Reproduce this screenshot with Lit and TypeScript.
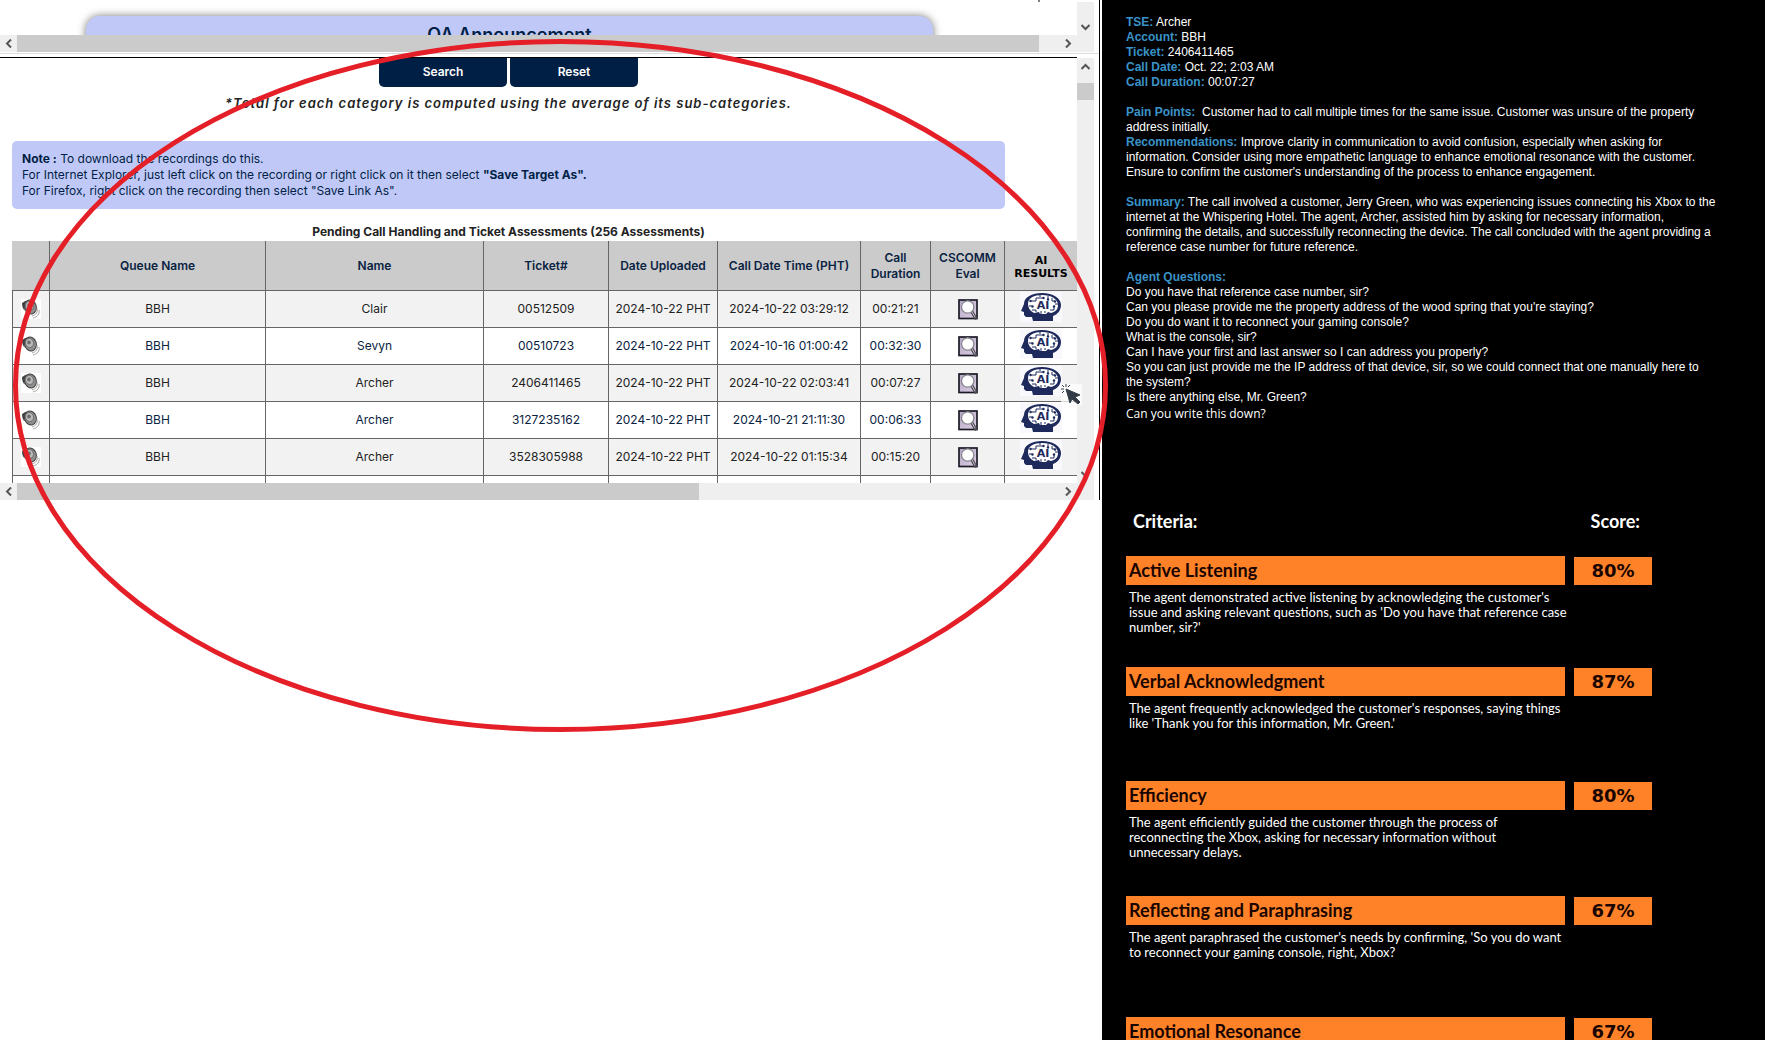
import { LitElement, html, css, svg } from "lit";
import { customElement } from "lit/decorators.js";

interface Call {
  queue: string;
  name: string;
  ticket: string;
  uploaded: string;
  called: string;
  duration: string;
}

interface Criterion {
  title: string;
  score: string;
  lines: string[];
}

const call = (name: string, ticket: string, called: string, duration: string): Call => ({
  queue: "BBH",
  name,
  ticket,
  uploaded: "2024-10-22 PHT",
  called,
  duration,
});

const CALLS: Call[] = [
  call("Clair", "00512509", "2024-10-22 03:29:12", "00:21:21"),
  call("Sevyn", "00510723", "2024-10-16 01:00:42", "00:32:30"),
  call("Archer", "2406411465", "2024-10-22 02:03:41", "00:07:27"),
  call("Archer", "3127235162", "2024-10-21 21:11:30", "00:06:33"),
  call("Archer", "3528305988", "2024-10-22 01:15:34", "00:15:20"),
];

const FACTS: [string, string][] = [
  ["TSE:", "Archer"],
  ["Account:", "BBH"],
  ["Ticket:", "2406411465"],
  ["Call Date:", "Oct. 22; 2:03 AM"],
  ["Call Duration:", "00:07:27"],
];

const QUESTIONS: string[] = [
  "Do you have that reference case number, sir?",
  "Can you please provide me the property address of the wood spring that you're staying?",
  "Do you do want it to reconnect your gaming console?",
  "What is the console, sir?",
  "Can I have your first and last answer so I can address you properly?",
  "So you can just provide me the IP address of that device, sir, so we could connect that one manually here to the system?",
  "Is there anything else, Mr. Green?",
];

const CRITERIA: Criterion[] = [
  {
    title: "Active Listening",
    score: "80%",
    lines: [
      "The agent demonstrated active listening by acknowledging the customer's",
      "issue and asking relevant questions, such as 'Do you have that reference case",
      "number, sir?'",
    ],
  },
  {
    title: "Verbal Acknowledgment",
    score: "87%",
    lines: [
      "The agent frequently acknowledged the customer's responses, saying things",
      "like 'Thank you for this information, Mr. Green.'",
    ],
  },
  {
    title: "Efficiency",
    score: "80%",
    lines: [
      "The agent efficiently guided the customer through the process of",
      "reconnecting the Xbox, asking for necessary information without",
      "unnecessary delays.",
    ],
  },
  {
    title: "Reflecting and Paraphrasing",
    score: "67%",
    lines: [
      "The agent paraphrased the customer's needs by confirming, 'So you do want",
      "to reconnect your gaming console, right, Xbox?",
    ],
  },
  { title: "Emotional Resonance", score: "67%", lines: [] },
];

const speakerIcon = html`<svg width="20" height="20" viewBox="0 0 20 20" aria-hidden="true">
  <rect width="20" height="20" fill="#fff" />
  <path d="M1 5 L4 2 L10 1 L13 13 L9 15 L2 10 Z" fill="#6f6f6f" />
  <path d="M1 4 L5 2 L5 9 L2 9 Z" fill="#3f3f3f" />
  <ellipse cx="9.500" cy="8" rx="5.800" ry="7" transform="rotate(-18 9.500 8)" fill="#8e8e8e" stroke="#444" />
  <ellipse cx="8.500" cy="7" rx="4" ry="4.600" transform="rotate(-18 8.500 7)" fill="#b9b9b9" stroke="#666" stroke-width=".8" />
  <ellipse cx="8" cy="6.500" rx="1.800" ry="2" fill="#6b6b6b" />
  <path d="M16 9 C17 13 15 16 11 17 M18 11 C19 15 16 18 12 19" fill="none" stroke="#a3a3a0" stroke-width="1" />
</svg>`;

const lensIcon = html`<svg width="20" height="21" viewBox="0 0 20 21" aria-hidden="true">
  <defs>
    <linearGradient id="paper" x1="0" y1="0" x2="1" y2="1">
      <stop offset="0" stop-color="#b3a6c4" />
      <stop offset="1" stop-color="#dccfe2" />
    </linearGradient>
  </defs>
  <rect x="1" y="1" width="18" height="18.500" fill="url(#paper)" stroke="#1c1a26" stroke-width="1.700" />
  <path d="M14 13 L17.500 19" stroke="#4b4753" stroke-width="3.200" stroke-linecap="round" />
  <path d="M14 13 L17 18" stroke="#c9c6cf" stroke-width="1" stroke-linecap="round" />
  <circle cx="9.700" cy="8" r="6.200" fill="#fff" stroke="#85858f" stroke-width="1.300" />
</svg>`;

const brainIcon = html`<svg width="42" height="30" viewBox="0 0 42 30" aria-hidden="true">
  <rect width="42" height="30" fill="#f8f8fd" />
  <path d="M4 12 C4 5 12 1 22 1 C33 1 41 6 41 13 C41 18 38 22 33 24 L33 29 L13 29 L12 25 L6 25 L4 23 L4 20 L1 19 Z" fill="#1e2a5c" />
  <path d="M8 12 C8 6 14 3 22 3 C31 3 38 7 38 13 C38 18 35 20 31 21 L28 20 L26 22 L20 22 L19 20 L14 21 C10 19 8 16 8 12 Z" fill="#fff" />
  <path d="M10 9 L16 9 L16 6 L23 6 M20 3 L20 5 M28 4 L28 8 M32 6 L32 9 L35 9 M9 14 L12 14 M12 18 L16 18 L16 20 M21 19 L21 22 M25 19 L25 21 M30 18 L34 18 L34 14 M35 12 L38 12" fill="none" stroke="#1e2a5c" stroke-width="1" />
  <g fill="#1e2a5c">
    <circle cx="10.500" cy="9" r="1.200" /><circle cx="23.500" cy="6" r="1.200" /><circle cx="28" cy="7.500" r="1.200" />
    <circle cx="35" cy="9.500" r="1.200" /><circle cx="12.500" cy="14.500" r="1.200" /><circle cx="34" cy="14.500" r="1.200" />
  </g>
  <text x="23" y="17" text-anchor="middle" font-family="'DejaVu Sans', sans-serif" font-size="11" font-weight="700" fill="#1e2a5c">AI</text>
</svg>`;

const chevron = (d: string) => html`<svg width="9" height="9" viewBox="0 0 9 9" aria-hidden="true">
  ${svg`<path d=${d} fill="none" stroke="#555" stroke-width="2" />`}
</svg>`;
const LEFT = "M7 0.500 L3 4.500 L7 8.500";
const RIGHT = "M2 0.500 L6 4.500 L2 8.500";
const UP = "M0.500 7 L4.500 3 L8.500 7";
const DOWN = "M0.500 2 L4.500 6 L8.500 2";

@customElement("app-root")
export class AppRoot extends LitElement {
  static styles = css`
    :host {
      display: block;
      font-family: Inter, "Liberation Sans", sans-serif;
    }
    * {
      box-sizing: border-box;
    }
    h1, h2, h3, p, ul, dl, dd {
      margin: 0;
      padding: 0;
      font: inherit;
    }
    button {
      font: inherit;
      border: 0;
      padding: 0;
      background: none;
    }
    .page {
      position: relative;
      display: grid;
      grid-template-columns: minmax(0, 1102fr) minmax(0, 663fr);
      height: 100vh;
      padding-right: 3px;
      overflow: hidden;
      background: #fff;
    }
    .frames {
      align-self: start;
      display: flex;
      flex-direction: column;
      margin-right: 2px;
      border-right: 1px solid #000;
    }
    .frame {
      display: flex;
      margin-right: 5px;
    }
    .divider {
      height: 4px;
      border-top: 1px solid #ddd;
      margin-top: 1px;
    }
    .view {
      flex: 1;
      min-width: 0;
    }
    .content {
      overflow: hidden;
    }
    .upper .content {
      height: 35px;
      padding: 16px 144px 0 86px;
    }
    .lower .view {
      border-top: 1px solid #000;
    }
    .lower .content {
      height: 425px;
      padding-left: 12px;
    }
    .banner {
      height: 60px;
      padding-top: 7px;
      border-radius: 14px;
      background: #c0c8f8;
      box-shadow: 0 0 8px #777;
      color: #001f45;
      text-align: center;
      font-size: 18px;
      line-height: 24px;
      font-weight: 600;
    }
    .hbar {
      display: flex;
      align-items: center;
      height: 17px;
      background: #efefef;
    }
    .arrow {
      display: flex;
      align-items: center;
      justify-content: center;
      width: 17px;
      height: 17px;
      flex: none;
    }
    .thumb {
      height: 17px;
      background: #cbcbcb;
    }
    .thumb.long {
      flex: 1022;
    }
    .rest.long {
      flex: 21;
    }
    .thumb.mid {
      flex: 682;
    }
    .rest.mid {
      flex: 361;
    }
    .vbar {
      display: flex;
      flex-direction: column;
      justify-content: space-between;
      width: 17px;
      background: #efefef;
    }
    .vbar .thumb {
      margin-top: 8px;
    }
    .upper .vbar {
      justify-content: flex-end;
      margin-top: 2px;
      padding-bottom: 16px;
    }
    .lower .vbar {
      margin-top: 1px;
      padding-bottom: 17px;
    }
    .actions {
      display: flex;
      justify-content: center;
      gap: 3px;
    }
    .action {
      width: 128px;
      height: 29px;
      padding-bottom: 2px;
      border-radius: 0 0 5px 5px;
      background: #001f45;
      color: #fff;
      font-size: 12px;
      font-weight: 600;
    }
    .main {
      margin-right: 72px;
    }
    .hint {
      margin-top: 7px;
      text-align: center;
      color: #222;
      font-size: 13px;
      line-height: 18px;
      font-style: italic;
      font-weight: 600;
      letter-spacing: 1px;
    }
    .note {
      margin-top: 29px;
      padding: 10px;
      border-radius: 5px;
      background: #c0c8f8;
      color: #001f45;
      font-size: 12px;
      line-height: 16px;
    }
    .note b {
      font-weight: 700;
    }
    table {
      width: 100%;
      table-layout: fixed;
      border-spacing: 0;
      font-size: 12px;
      line-height: 16px;
      text-align: center;
      color: #222;
    }
    caption {
      padding: 15px 72px 1px 0;
      font-weight: 700;
      color: #222;
    }
    .c-play { width: 38px; }
    .c-queue { width: 216px; }
    .c-name { width: 218px; }
    .c-ticket { width: 125px; }
    .c-uploaded { width: 109px; }
    .c-called { width: 143px; }
    .c-duration { width: 70px; }
    .c-eval { width: 74px; }
    th, td {
      padding: 0;
      border-right: 1px solid #666;
      border-bottom: 1px solid #666;
    }
    th {
      height: 50px;
      background: #cbcbcb;
      color: #0a2342;
      font-weight: 600;
    }
    th.ai {
      padding-top: 3px;
      color: #000;
      font-family: "DejaVu Sans", sans-serif;
      font-size: 11px;
      line-height: 13px;
      font-weight: 700;
    }
    td {
      height: 37px;
    }
    td:first-child {
      border-left: 1px solid #666;
    }
    th:last-child, td:last-child {
      border-right: 0;
    }
    td:last-child {
      padding-bottom: 4px;
    }
    tbody tr:nth-child(odd) {
      background: #f2f2f2;
    }
    tbody tr:nth-child(even) {
      color: #0a2342;
    }
    .icon {
      display: block;
      margin: 0 auto;
    }
    .icon svg {
      display: block;
    }
    .overlay {
      position: absolute;
      left: 0;
      top: 0;
      pointer-events: none;
    }
    .report {
      display: flex;
      flex-direction: column;
      min-height: 0;
      padding: 15px 24px 0;
      background: #000;
      color: #fff;
      font-family: "Liberation Sans", Arial, sans-serif;
      font-size: 12px;
      line-height: 15px;
      overflow: hidden;
    }
    .report b {
      color: #3a93c8;
    }
    .facts {
      margin-bottom: 15px;
    }
    .prose {
      max-width: 590px;
      margin-bottom: 15px;
    }
    .questions {
      max-width: 590px;
      list-style: none;
    }
    .last {
      padding-top: 1px;
      font-family: "Open Sans", sans-serif;
      font-size: 12px;
    }
    .scores {
      margin-top: 89px;
      max-width: 526px;
      font-family: Lato, sans-serif;
    }
    .labels {
      display: flex;
      justify-content: space-between;
      padding: 0 12px 0 7px;
      margin-bottom: 24px;
      font-size: 18px;
      line-height: 22px;
      font-weight: 700;
    }
    .criteria {
      display: grid;
      grid-template-rows: 111px 114px 115px 121px 29px;
      list-style: none;
    }
    .head {
      display: grid;
      grid-template-columns: 1fr 78px;
      gap: 9px;
      color: #1a0500;
    }
    .title {
      height: 29px;
      padding-left: 3px;
      background: #ff8228;
      font-size: 18px;
      line-height: 29px;
      font-weight: 700;
    }
    .score {
      height: 28px;
      margin-top: 1px;
      background: #ff8228;
      text-align: center;
      font-family: "DejaVu Sans", sans-serif;
      font-size: 18px;
      line-height: 28px;
      font-weight: 700;
    }
    .detail {
      padding: 5px 0 0 3px;
      font-size: 13px;
      line-height: 15px;
      white-space: nowrap;
    }
  `;

  private renderRow(c: Call) {
    return html`<tr>
      <td><button class="icon" aria-label="Play recording">${speakerIcon}</button></td>
      <td>${c.queue}</td>
      <td>${c.name}</td>
      <td>${c.ticket}</td>
      <td>${c.uploaded}</td>
      <td>${c.called}</td>
      <td>${c.duration}</td>
      <td><button class="icon" aria-label="Open evaluation">${lensIcon}</button></td>
      <td><button class="icon" aria-label="Open AI results">${brainIcon}</button></td>
    </tr>`;
  }

  private renderCriterion(c: Criterion) {
    return html`<li>
      <div class="head">
        <h3 class="title">${c.title}</h3>
        <div class="score">${c.score}</div>
      </div>
      <p class="detail">${c.lines.map((line, i) => (i ? html`<br />${line}` : line))}</p>
    </li>`;
  }

  render() {
    return html`<div class="page">
      <main class="frames">
        <section class="frame upper">
          <div class="view">
            <div class="content"><h1 class="banner">QA Announcement</h1></div>
            <div class="hbar">
              <button class="arrow" aria-label="Scroll left">${chevron(LEFT)}</button>
              <div class="thumb long"></div>
              <div class="rest long"></div>
              <button class="arrow" aria-label="Scroll right">${chevron(RIGHT)}</button>
            </div>
          </div>
          <div class="vbar">
            <button class="arrow" aria-label="Scroll down">${chevron(DOWN)}</button>
          </div>
        </section>
        <div class="divider"></div>
        <section class="frame lower">
          <div class="view">
            <div class="content">
              <div class="main">
                <div class="actions">
                  <button class="action">Search</button>
                  <button class="action">Reset</button>
                </div>
                <p class="hint">*Total for each category is computed using the average of its sub-categories.</p>
                <p class="note">
                  <b>Note :</b> To download the recordings do this.<br />
                  For Internet Explorer, just left click on the recording or right click on it then select
                  <b>"Save Target As".</b><br />
                  For Firefox, right click on the recording then select "Save Link As".
                </p>
              </div>
              <table>
                <caption>Pending Call Handling and Ticket Assessments (256 Assessments)</caption>
                <colgroup>
                  <col class="c-play" /><col class="c-queue" /><col class="c-name" /><col class="c-ticket" />
                  <col class="c-uploaded" /><col class="c-called" /><col class="c-duration" /><col class="c-eval" />
                  <col />
                </colgroup>
                <thead>
                  <tr>
                    <th></th>
                    <th>Queue Name</th>
                    <th>Name</th>
                    <th>Ticket#</th>
                    <th>Date Uploaded</th>
                    <th>Call Date Time (PHT)</th>
                    <th>Call<br />Duration</th>
                    <th>CSCOMM<br />Eval</th>
                    <th class="ai">AI<br />RESULTS</th>
                  </tr>
                </thead>
                <tbody>
                  ${CALLS.map((c) => this.renderRow(c))}
                  <tr><td></td><td></td><td></td><td></td><td></td><td></td><td></td><td></td><td></td></tr>
                </tbody>
              </table>
            </div>
            <div class="hbar">
              <button class="arrow" aria-label="Scroll left">${chevron(LEFT)}</button>
              <div class="thumb mid"></div>
              <div class="rest mid"></div>
              <button class="arrow" aria-label="Scroll right">${chevron(RIGHT)}</button>
            </div>
          </div>
          <div class="vbar">
            <div>
              <button class="arrow" aria-label="Scroll up">${chevron(UP)}</button>
              <div class="thumb"></div>
            </div>
            <button class="arrow" aria-label="Scroll down">${chevron(DOWN)}</button>
          </div>
        </section>
      </main>

      <aside class="report">
        <div class="facts">${FACTS.map(([k, v]) => html`<p><b>${k}</b> ${v}</p>`)}</div>
        <div class="prose">
          <p><b>Pain Points:</b>&nbsp; Customer had to call multiple times for the same issue. Customer was unsure of the property address initially.</p>
          <p><b>Recommendations:</b> Improve clarity in communication to avoid confusion, especially when asking for information. Consider using more empathetic language to enhance emotional resonance with the customer. Ensure to confirm the customer's understanding of the process to enhance engagement.</p>
        </div>
        <div class="prose">
          <p><b>Summary:</b> The call involved a customer, Jerry Green, who was experiencing issues connecting his Xbox to the internet at the Whispering Hotel. The agent, Archer, assisted him by asking for necessary information, confirming the details, and successfully reconnecting the device. The call concluded with the agent providing a reference case number for future reference.</p>
        </div>
        <h2><b>Agent Questions:</b></h2>
        <ul class="questions">
          ${QUESTIONS.map((q) => html`<li>${q}</li>`)}
          <li class="last">Can you write this down?</li>
        </ul>
        <div class="scores">
          <div class="labels"><span>Criteria:</span><span>Score:</span></div>
          <ul class="criteria">${CRITERIA.map((c) => this.renderCriterion(c))}</ul>
        </div>
      </aside>

      <svg class="overlay" width="1112" height="736" viewBox="0 0 1112 736" aria-hidden="true">
        <path d="M1039 0 V2" stroke="#000" />
        <rect x="1061" y="384" width="21" height="21" fill="#fff" opacity=".75" />
        <path d="M1066 389 L1080 395 L1075 397 L1080 402 L1078 404 L1072 399 L1070 403 Z" fill="#333c46" stroke="#333c46" />
        <path d="M1066 384 V387 M1061 389 H1064 M1062 385 L1064 387 M1070 385 L1068 387 M1062 393 L1064 391" stroke="#333c46" />
        <ellipse cx="560.500" cy="385.500" rx="545" ry="344" fill="none" stroke="#e51f27" stroke-width="5" />
      </svg>
    </div>`;
  }
}
